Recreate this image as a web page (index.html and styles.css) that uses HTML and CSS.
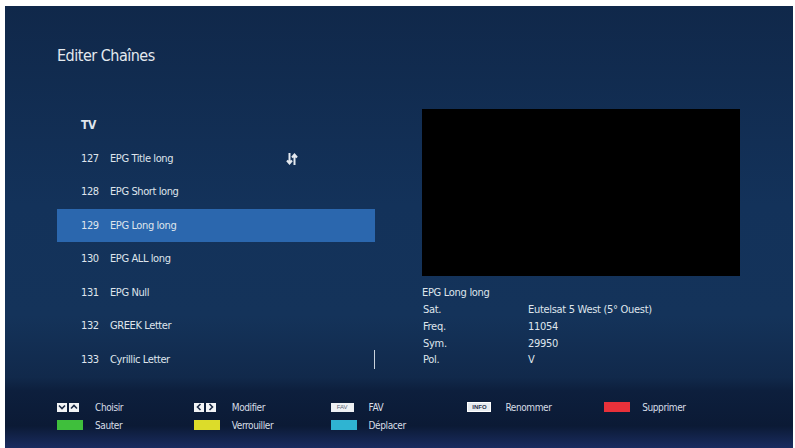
FILE: index.html
```html
<!DOCTYPE html>
<html lang="fr">
<head>
<meta charset="utf-8">
<title>Editer Chaînes</title>
<link rel="stylesheet" href="styles.css">
</head>
<body>
<div class="screen">
  <header class="header">
    <h1 class="title">Editer Chaînes</h1>
  </header>
  <main class="main">
    <section class="list">
      <div class="row group">TV</div>
      <div class="row"><span class="num">127</span><span class="name">EPG Title long</span>
        <svg class="sort" width="12" height="14" viewBox="0 0 12 14"><path d="M3.5 1v10M1 8.5l2.5 3 2.5-3" stroke="#e4e9ef" stroke-width="2" fill="none"/><path d="M8.5 13V3M6 5.5l2.5-3 2.5 3" stroke="#e4e9ef" stroke-width="2" fill="none"/></svg>
      </div>
      <div class="row"><span class="num">128</span><span class="name">EPG Short long</span></div>
      <div class="row selected"><span class="num">129</span><span class="name">EPG Long long</span></div>
      <div class="row"><span class="num">130</span><span class="name">EPG ALL long</span></div>
      <div class="row"><span class="num">131</span><span class="name">EPG Null</span></div>
      <div class="row"><span class="num">132</span><span class="name">GREEK Letter</span></div>
      <div class="row"><span class="num">133</span><span class="name">Cyrillic Letter</span></div>
      <div class="scrollbar"></div>
    </section>
    <section class="detail">
      <div class="preview"></div>
      <div class="info">
        <div class="info-title">EPG Long long</div>
        <div class="info-row"><span class="lbl">Sat.</span><span>Eutelsat 5 West (5° Ouest)</span></div>
        <div class="info-row"><span class="lbl">Freq.</span><span>11054</span></div>
        <div class="info-row"><span class="lbl">Sym.</span><span>29950</span></div>
        <div class="info-row"><span class="lbl">Pol.</span><span>V</span></div>
      </div>
    </section>
  </main>
  <footer class="footer">
    <div class="hint"><span class="keys"><span class="k"><svg width="8" height="6" viewBox="0 0 8 6"><path d="M1 1.5l3 3 3-3" stroke="#1b2a44" stroke-width="1.6" fill="none"/></svg></span><span class="k"><svg width="8" height="6" viewBox="0 0 8 6"><path d="M1 4.5l3-3 3 3" stroke="#1b2a44" stroke-width="1.6" fill="none"/></svg></span></span><span>Choisir</span></div>
    <div class="hint"><span class="keys"><span class="k"><svg width="6" height="8" viewBox="0 0 6 8"><path d="M4.5 1l-3 3 3 3" stroke="#1b2a44" stroke-width="1.6" fill="none"/></svg></span><span class="k"><svg width="6" height="8" viewBox="0 0 6 8"><path d="M1.5 1l3 3-3 3" stroke="#1b2a44" stroke-width="1.6" fill="none"/></svg></span></span><span>Modifier</span></div>
    <div class="hint"><span class="keys"><span class="tag">FAV</span></span><span>FAV</span></div>
    <div class="hint"><span class="keys"><span class="tag info-tag">INFO</span></span><span>Renommer</span></div>
    <div class="hint"><span class="keys"><span class="color red"></span></span><span>Supprimer</span></div>
    <div class="hint"><span class="keys"><span class="color green"></span></span><span>Sauter</span></div>
    <div class="hint"><span class="keys"><span class="color yellow"></span></span><span>Verrouiller</span></div>
    <div class="hint"><span class="keys"><span class="color cyan"></span></span><span>Déplacer</span></div>
  </footer>
</div>
</body>
</html>
```
FILE: styles.css
```css
html, body {
  margin: 0;
  padding: 0;
  background: #ffffff;
}
body {
  font-family: "DejaVu Sans Condensed", "Liberation Sans", sans-serif;
  color: #dfe5ec;
}
.screen {
  margin: 6px 2px 0 5px;
  height: 442px;
  display: flex;
  flex-direction: column;
  background: linear-gradient(180deg, #10284a 0%, #13325a 45%, #14335a 70%, #11294b 84%, #0d1f3d 87%, #0b1a35 95%, #1a2c60 100%);
  overflow: hidden;
}
.header {
  padding: 39px 0 0 52px;
  height: 63px;
  box-sizing: border-box;
}
.title {
  margin: 0;
  font-size: 16px;
  letter-spacing: -0.5px;
  line-height: 22px;
  font-weight: normal;
  color: #e4e9ef;
}
.main {
  margin-top: 39px;
  display: flex;
  padding-left: 52px;
  gap: 47px;
}
.list {
  width: 318px;
  position: relative;
}
.row {
  height: 33.5px;
  display: flex;
  align-items: center;
  padding-left: 24px;
  font-size: 11px;
  letter-spacing: -0.4px;
  color: #dfe5ec;
  position: relative;
}
.row.group {
  font-size: 12px;
  font-weight: bold;
}
.row.selected {
  background: #2b67ae;
}
.num {
  width: 29px;
}
.sort {
  position: absolute;
  left: 229px;
  top: 10px;
}
.scrollbar {
  position: absolute;
  right: 0;
  top: 242px;
  width: 1px;
  height: 19px;
  background: #c9d2dc;
}
.detail {
  width: 318px;
  padding-top: 1px;
}
.preview {
  height: 167px;
  background: #000000;
}
.info {
  margin-top: 8px;
  font-size: 11px;
  letter-spacing: -0.3px;
}
.info-title {
  height: 18px;
  line-height: 18px;
}
.info-row {
  display: flex;
  height: 16.8px;
  line-height: 16.8px;
}
.lbl {
  width: 105px;
  padding-left: 1px;
}
.footer {
  margin-top: 22px;
  padding-left: 52px;
  display: grid;
  grid-template-columns: repeat(5, 136.8px);
  grid-auto-rows: 18px;
  font-size: 10px;
  letter-spacing: -0.4px;
}
.hint {
  display: flex;
  align-items: center;
  color: #d7dee7;
}
.keys {
  width: 38px;
  display: flex;
  gap: 2px;
  align-items: center;
  letter-spacing: 0;
}
.k {
  width: 10px;
  height: 9px;
  background: #f2f4f6;
  display: flex;
  align-items: center;
  justify-content: center;
}
.tag {
  width: 23px;
  height: 9px;
  background: #eef1f4;
  color: #5a6574;
  font-size: 6px;
  line-height: 9px;
  text-align: center;
  font-family: "Liberation Sans", sans-serif;
}
.info-tag {
  width: 22px;
  height: 8px;
  line-height: 8px;
  color: #1f2f4a;
  border: 1px solid #ffffff;
  background: #e6ebf0;
  font-weight: bold;
}
.color {
  width: 26px;
  height: 10px;
}
.red { background: #e8313a; }
.green { background: #3fbf3c; }
.yellow { background: #dcdc2a; }
.cyan { background: #2fb4d2; }
```
